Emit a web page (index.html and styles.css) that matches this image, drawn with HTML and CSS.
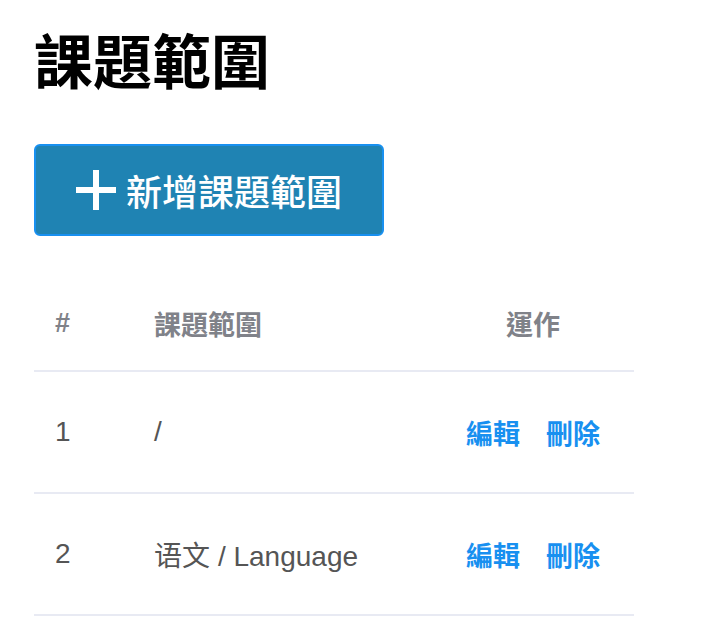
FILE: index.html
```html
<!DOCTYPE html>
<html lang="zh-Hant">
<head>
  <meta charset="UTF-8" />
  <meta name="viewport" content="width=device-width, initial-scale=1" />
  <title>課題範圍</title>
  <link rel="stylesheet" href="styles.css">
</head>
<body>
  <div class="pagina">
    <h1>課題範圍</h1>

    <button class="btn-nuevo" type="button">
      <svg class="icono-mas" viewBox="0 0 40 40" aria-hidden="true">
        <rect x="17" y="0" width="6" height="40" fill="#fff"/>
        <rect x="0" y="17" width="40" height="6" fill="#fff"/>
      </svg>
      <span>新增課題範圍</span>
    </button>

    <table class="tabla">
      <thead>
        <tr>
          <th class="col-num">#</th>
          <th class="col-nombre">課題範圍</th>
          <th class="col-accion">運作</th>
        </tr>
      </thead>
      <tbody>
        <tr>
          <td class="col-num">1</td>
          <td class="col-nombre">/</td>
          <td class="col-accion"><a href="#">編輯</a><a href="#">刪除</a></td>
        </tr>
        <tr>
          <td class="col-num">2</td>
          <td class="col-nombre">语文 / Language</td>
          <td class="col-accion"><a href="#">編輯</a><a href="#">刪除</a></td>
        </tr>
      </tbody>
    </table>
  </div>
</body>
</html>
```

FILE: styles.css
```css
/* ---------- Base ---------- */
:root{
  --azul:#1f83b3;
  --azul-borde:#1890f0;
  --enlace:#1890f0;
  --linea:#e8eaf3;
}
*{box-sizing:border-box}
body{
  margin:0;
  font-family:"Liberation Sans","Noto Sans CJK TC",Arial,sans-serif;
  color:#111;
  background:#fff;
}
.pagina{
  padding:30px 34px;
}

/* ---------- Título ---------- */
h1{
  margin:0;
  font-size:59px;
  line-height:68px;
  font-weight:700;
  color:#000;
}

/* ---------- Botón ---------- */
.btn-nuevo{
  display:flex;
  align-items:center;
  justify-content:center;
  gap:10px;
  width:350px;
  height:92px;
  margin-top:46px;
  padding:0;
  border:2px solid var(--azul-borde);
  border-radius:6px;
  background:var(--azul);
  color:#fff;
  font-family:inherit;
  font-size:36px;
  font-weight:500;
  cursor:pointer;
}
.icono-mas{width:40px;height:40px}

/* ---------- Tabla ---------- */
.tabla{
  width:600px;
  margin-top:40px;
  border-collapse:collapse;
  font-size:27px;
}
.tabla th,.tabla td{
  padding:0 21px;
  text-align:left;
  border-bottom:2px solid var(--linea);
  white-space:nowrap;
}
.tabla th{
  height:95px;
  color:#808289;
  font-weight:700;
}
.tabla td{
  height:122px;
  color:#555;
  font-size:28px;
}
.col-num{width:100px}
.col-nombre{width:300px}
.tabla .col-accion{width:200px;text-align:center;font-size:27px}
.col-accion a{
  color:var(--enlace);
  font-weight:700;
  text-decoration:none;
  margin:0 13px;
}
```
